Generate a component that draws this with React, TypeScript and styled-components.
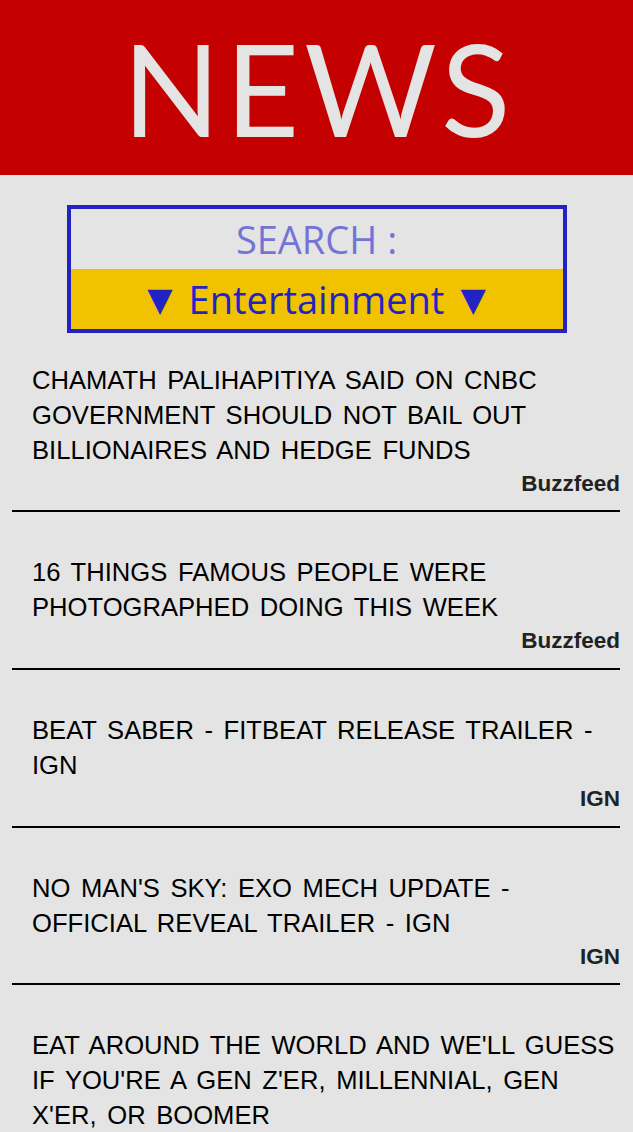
import React from "react";
import styled, { createGlobalStyle } from "styled-components";

const GlobalStyle = createGlobalStyle`
  html, body {
    margin: 0;
    padding: 0;
    background: #e4e4e4;
  }
  * { box-sizing: border-box; }
`;

const Page = styled.div`
  width: 633px;
  min-height: 1132px;
  background: #e4e4e4;
  overflow: hidden;
`;

const Header = styled.header`
  height: 175px;
  background: #c40000;
  display: flex;
  align-items: center;
  justify-content: center;
`;

const Title = styled.h1`
  margin: 0;
  font-family: Lato, "Open Sans", sans-serif;
  font-weight: 400;
  font-size: 128px;
  line-height: 1;
  color: #e4e4e4;
  letter-spacing: 5px;
  padding-left: 5px;
`;

const SearchBox = styled.div`
  width: 500px;
  margin: 30px auto 0;
  border: 4px solid #2323c4;
  display: flex;
  flex-direction: column;
`;

const SearchRow = styled.div<{ $highlight?: boolean }>`
  height: 60px;
  display: flex;
  align-items: center;
  justify-content: center;
  gap: 16px;
  font-family: "Open Sans", Lato, sans-serif;
  font-size: 38px;
  background: ${(p) => (p.$highlight ? "#f0c200" : "transparent")};
  color: ${(p) => (p.$highlight ? "#2323c4" : "#7474d4")};
`;

const Arrow = styled.span`
  font-family: "DejaVu Sans", sans-serif;
  font-size: 33px;
  line-height: 1;
`;

const List = styled.main`
  display: flex;
  flex-direction: column;
`;

const Article = styled.article`
  margin: 0 13px 0 12px;
  padding: 43px 0 11px 20px;
  border-bottom: 2px solid #000;
  &:first-child {
    padding-top: 29.5px;
  }
`;

const Headline = styled.p`
  margin: 0;
  font-family: "Liberation Sans", Arial, sans-serif;
  font-size: 25.6px;
  line-height: 35px;
  word-spacing: 3.5px;
  color: #000;
  text-transform: uppercase;
`;

const Source = styled.div`
  font-family: "Liberation Sans", Arial, sans-serif;
  font-weight: 700;
  font-size: 22.5px;
  line-height: 31.7px;
  text-align: right;
  color: #222;
`;

const articles = [
  {
    title:
      "Chamath Palihapitiya said on CNBC government should not bail out billionaires and hedge funds",
    source: "Buzzfeed",
  },
  {
    title: "16 Things Famous People Were Photographed Doing This Week",
    source: "Buzzfeed",
  },
  { title: "Beat Saber - FitBeat Release Trailer - IGN", source: "IGN" },
  {
    title: "No Man's Sky: Exo Mech Update - Official Reveal Trailer - IGN",
    source: "IGN",
  },
  {
    title:
      "Eat Around The World And We'll Guess If You're A Gen Z'er, Millennial, Gen X'er, Or Boomer",
    source: "Buzzfeed",
  },
];

export default function App() {
  return (
    <Page>
      <GlobalStyle />
      <Header>
        <Title>NEWS</Title>
      </Header>
      <SearchBox>
        <SearchRow>SEARCH :</SearchRow>
        <SearchRow $highlight>
          <Arrow>▼</Arrow>
          <span>Entertainment</span>
          <Arrow>▼</Arrow>
        </SearchRow>
      </SearchBox>
      <List>
        {articles.map((a, i) => (
          <Article key={i}>
            <Headline>{a.title}</Headline>
            <Source>{a.source}</Source>
          </Article>
        ))}
      </List>
    </Page>
  );
}
